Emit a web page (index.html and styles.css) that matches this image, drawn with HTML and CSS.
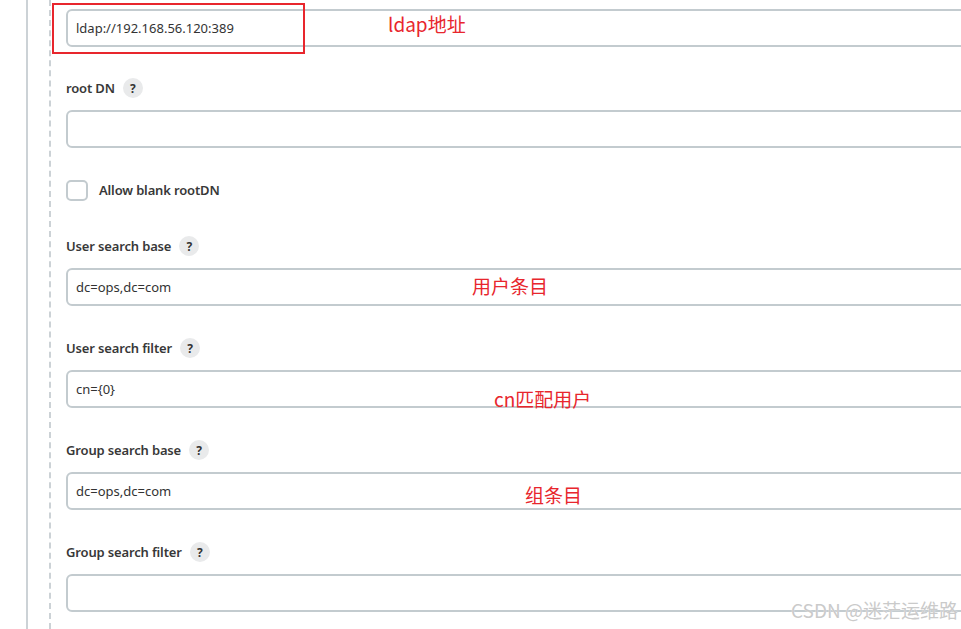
FILE: index.html
```html
<!DOCTYPE html>
<html lang="zh-CN">
<head>
    <meta charset="UTF-8">
    <meta name="viewport" content="width=device-width, initial-scale=1.0">
    <title>LDAP 配置</title>
    <link rel="stylesheet" href="styles.css">
</head>
<body>
    <div class="page">
        <div class="section">
            <div class="group">
                <div class="field first">
                    <input class="text-input" type="text" value="ldap://192.168.56.120:389">
                </div>

                <div class="field">
                    <div class="label">root DN <span class="help">?</span></div>
                    <input class="text-input" type="text" value="">
                </div>

                <div class="check-row">
                    <span class="checkbox"></span>
                    <span class="check-label">Allow blank rootDN</span>
                </div>

                <div class="field">
                    <div class="label">User search base <span class="help">?</span></div>
                    <input class="text-input" type="text" value="dc=ops,dc=com">
                </div>

                <div class="field">
                    <div class="label">User search filter <span class="help">?</span></div>
                    <input class="text-input" type="text" value="cn={0}">
                </div>

                <div class="field">
                    <div class="label">Group search base <span class="help">?</span></div>
                    <input class="text-input" type="text" value="dc=ops,dc=com">
                </div>

                <div class="field">
                    <div class="label">Group search filter <span class="help">?</span></div>
                    <input class="text-input" type="text" value="">
                </div>
            </div>
        </div>
    </div>

    <!-- 标注 -->
    <div class="mark-box"></div>
    <div class="note note-ldap">ldap地址</div>
    <div class="note note-user">用户条目</div>
    <div class="note note-filter">cn匹配用户</div>
    <div class="note note-group">组条目</div>

    <div class="watermark">CSDN @迷茫运维路</div>
</body>
</html>
```

FILE: styles.css
```css
html, body {
    margin: 0;
    overflow: hidden;
}

body {
    background-color: #ffffff;
    color: #333333;
    font-family: "Noto Sans", "Open Sans", sans-serif;
    height: 629px;
}

.page {
    box-sizing: border-box;
    height: 629px;
    padding-left: 26px;
    overflow: hidden;
}

.section {
    box-sizing: border-box;
    height: 100%;
    border-left: 2px solid #ccd2d6;
    padding-left: 21px;
    margin-right: -60px;
}

.group {
    box-sizing: border-box;
    height: 100%;
    border-left: 2px dashed #ccd2d6;
    padding-left: 15px;
}

.field {
    margin-bottom: 32px;
}

.field.first {
    padding-top: 9px;
    margin-bottom: 31px;
}

.label {
    display: flex;
    align-items: center;
    gap: 8px;
    height: 20px;
    margin-bottom: 12px;
    font-size: 13px;
    font-weight: 600;
    letter-spacing: -0.15px;
    color: #383838;
}

.help {
    display: inline-flex;
    align-items: center;
    justify-content: center;
    width: 20px;
    height: 20px;
    border-radius: 50%;
    background-color: #e9eaeb;
    font-size: 12px;
    font-weight: 700;
    color: #333333;
}

.text-input {
    display: block;
    box-sizing: border-box;
    width: 100%;
    height: 38px;
    border: 2px solid #c3cbcf;
    border-radius: 6px;
    padding: 0 8px;
    font-family: "Noto Sans", "Open Sans", sans-serif;
    font-size: 13px;
    color: #333333;
    background: #ffffff;
    outline: none;
}

.check-row {
    display: flex;
    align-items: center;
    gap: 11px;
    height: 22px;
    margin-top: -1px;
    margin-bottom: 35px;
}

.checkbox {
    box-sizing: border-box;
    width: 22px;
    height: 21px;
    border: 2px solid #c3cbcf;
    border-radius: 5px;
}

.check-label {
    font-size: 13px;
    font-weight: 600;
    letter-spacing: -0.15px;
    color: #383838;
}

/* 红色标注 */
.mark-box {
    position: absolute;
    left: 52px;
    top: 3px;
    width: 249px;
    height: 47px;
    border: 2px solid #e8262d;
}

.note {
    position: absolute;
    font-family: "Noto Sans CJK SC", sans-serif;
    font-size: 19px;
    line-height: 24px;
    color: #e8262d;
}

.note-ldap {
    left: 388px;
    top: 12px;
}

.note-user {
    left: 472px;
    top: 274px;
}

.note-filter {
    left: 494px;
    top: 387px;
}

.note-group {
    left: 525px;
    top: 483px;
}

.watermark {
    position: absolute;
    right: 3px;
    top: 597px;
    font-family: "Noto Sans CJK SC", sans-serif;
    font-size: 19px;
    line-height: 26px;
    color: #cacaca;
    text-shadow: 0 0 1px #ffffff;
}
```
